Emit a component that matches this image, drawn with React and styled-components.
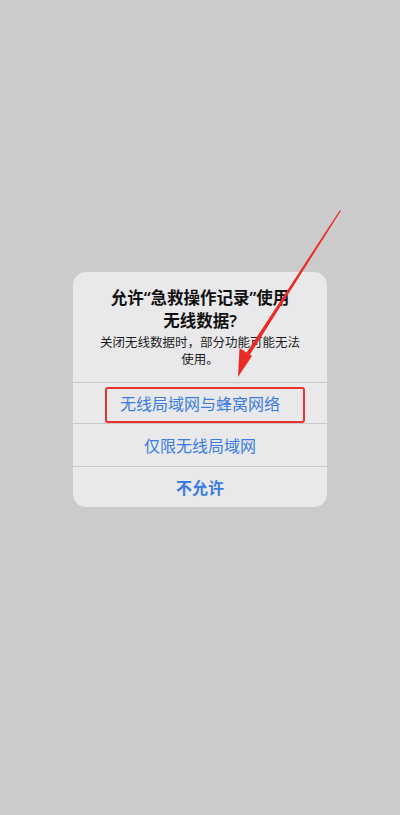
import React from 'react';
import styled, {createGlobalStyle} from 'styled-components';

const Global = createGlobalStyle`
    html, body {
        margin: 0;
        padding: 0;
        background: #cbcbcb;
    }
    body {
        font-family: "Noto Sans CJK SC", "Noto Sans", sans-serif;
    }
`;

const Screen = styled.div`
    position: relative;
    width: 400px;
    height: 815px;
    background: #cbcbcb;
    display: flex;
    justify-content: center;
    padding-top: 272px;
    box-sizing: border-box;
    overflow: hidden;
`;

const Alert = styled.div`
    width: 254px;
    height: 235px;
    background: #e9e9eb;
    border-radius: 13px;
    display: flex;
    flex-direction: column;
    overflow: hidden;
`;

const Head = styled.div`
    padding: 14px 16px 0;
    height: 111px;
    box-sizing: border-box;
    text-align: center;
`;

// latin quotes stay narrow like on iOS
const Title = styled.div`
    font-family: "Noto Sans", "Noto Sans CJK SC", sans-serif;
    font-size: 16.5px;
    font-weight: 600;
    line-height: 23px;
    color: #111;
`;

const Message = styled.div`
    margin-top: 1px;
    font-size: 12.5px;
    line-height: 17px;
    color: #1c1c1c;
`;

const Action = styled.div`
    height: ${props => props.h || 42}px;
    border-top: 1px solid #c9c9cc;
    display: flex;
    align-items: center;
    justify-content: center;
    font-size: 16px;
    font-weight: ${props => props.bold ? 600 : 400};
    color: #3b7ce0;
    position: relative;
`;

const Highlight = styled.div`
    position: absolute;
    left: 32px;
    top: 4px;
    width: 200px;
    height: 36px;
    box-sizing: border-box;
    border: 2.5px solid #e8322c;
    border-radius: 3px;
`;

const Arrow = styled.svg`
    position: absolute;
    left: 0;
    top: 0;
    pointer-events: none;
`;

export default function App() {
    return <Screen>
        <Global />
        <Alert>
            <Head>
                <Title>允许“急救操作记录”使用<br />无线数据?</Title>
                <Message>关闭无线数据时，部分功能可能无法<br />使用。</Message>
            </Head>
            <Action h={41}>
                无线局域网与蜂窝网络
                <Highlight />
            </Action>
            <Action>仅限无线局域网</Action>
            <Action h={41} bold>不允许</Action>
        </Alert>
        <Arrow width="400" height="815" viewBox="0 0 400 815">
            <polygon points="340,210 340.8,211 246.5,360 243,358" fill="#ea2b25" />
            <polygon points="238,377 239.5,348 252,356" fill="#ea2b25" />
        </Arrow>
    </Screen>;
}
